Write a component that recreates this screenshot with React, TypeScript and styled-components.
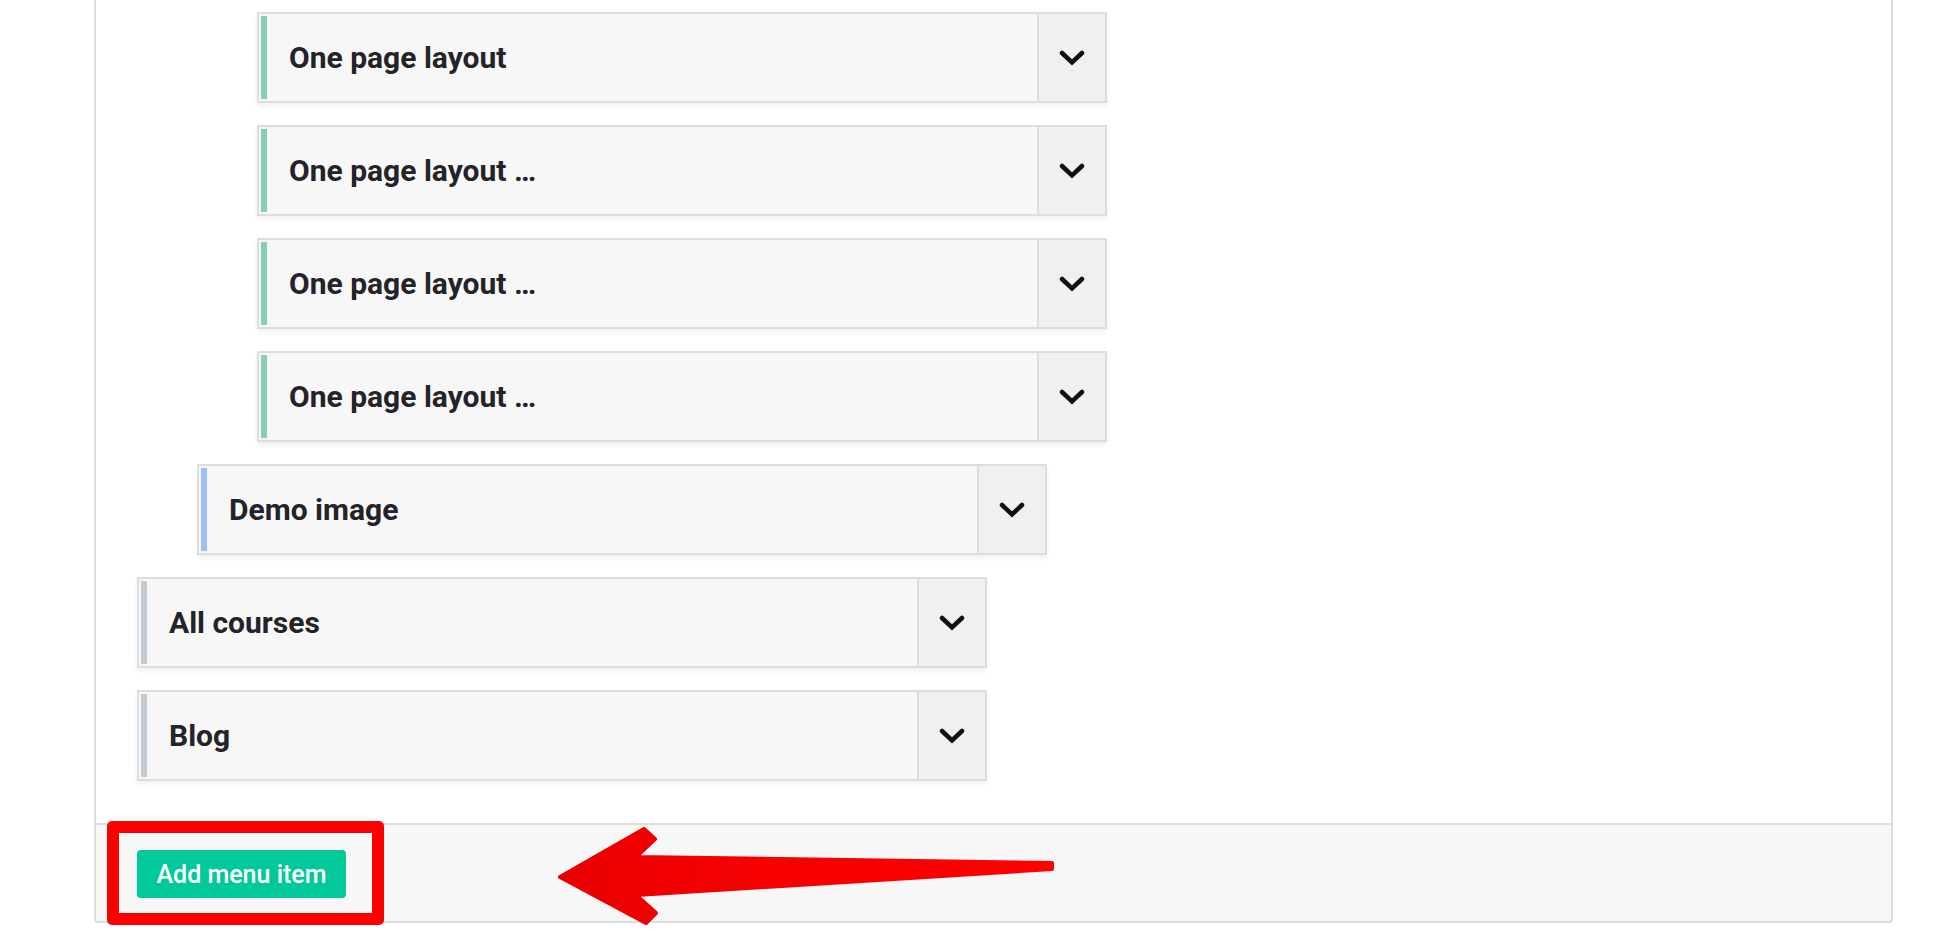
import React from "react";
import styled, { createGlobalStyle } from "styled-components";

const GlobalStyle = createGlobalStyle`
  body {
    margin: 0;
    background: #ffffff;
    font-family: Roboto, "Liberation Sans", Arial, sans-serif;
  }
`;

const Page = styled.div`
  position: relative;
  height: 944px;
  overflow: hidden;
  padding: 0 43px 0 94px;
`;

const Panel = styled.div`
  background: #ffffff;
  border: 2px solid #dddddd;
  border-top: none;
  border-radius: 0 0 4px 4px;
`;

const MenuList = styled.div`
  display: flex;
  flex-direction: column;
  gap: 22px;
  padding: 12px 0 42px 41px;
`;

const stripeColors = ["#c1cbd6", "#9cc0f6", "#86ceba"];

type LevelProps = { $level: number };

const MenuRow = styled.div<LevelProps>`
  display: flex;
  box-sizing: border-box;
  width: 850px;
  height: 91px;
  margin-left: ${({ $level }) => $level * 60}px;
  border: 2px solid #dddddd;
  background: #f7f7f7;
  box-shadow: 0 3px 5px rgba(0, 0, 0, 0.06);
`;

const Stripe = styled.div<LevelProps>`
  width: 6px;
  margin: 2px;
  background: ${({ $level }) => stripeColors[$level]};
`;

const Title = styled.div`
  flex: 1;
  display: flex;
  align-items: center;
  padding-left: 20px;
  font-size: 30px;
  font-weight: 700;
  color: #232329;
`;

const Toggle = styled.div`
  width: 66px;
  display: flex;
  align-items: center;
  justify-content: center;
  border-left: 2px solid #dddddd;
  background: #f0f0f0;
`;

const Footer = styled.div`
  border-top: 2px solid #dddddd;
  background: #f7f7f7;
  padding: 25px 41px 23px;
  border-radius: 0 0 4px 4px;
`;

const AddButton = styled.button`
  height: 48px;
  width: 209px;
  border: none;
  border-radius: 4px;
  background: #02c999;
  color: #ffffff;
  font-family: Roboto, "Liberation Sans", Arial, sans-serif;
  font-size: 25px;
  font-weight: 500;
  padding: 0;
`;

const RedFrame = styled.div`
  position: absolute;
  left: 107px;
  top: 821px;
  width: 277px;
  height: 104px;
  box-sizing: border-box;
  border: 12px solid #ff0000;
  border-radius: 5px;
`;

const ArrowMark = styled.svg`
  position: absolute;
  left: 550px;
  top: 820px;
`;

const Chevron = () => (
  <svg width="26" height="16" viewBox="0 0 26 16">
    <path
      d="M3 3 L13 12.5 L23 3"
      fill="none"
      stroke="#111111"
      strokeWidth="4.5"
      strokeLinecap="round"
      strokeLinejoin="miter"
    />
  </svg>
);

const items = [
  { title: "One page layout", level: 2 },
  { title: "One page layout …", level: 2 },
  { title: "One page layout …", level: 2 },
  { title: "One page layout …", level: 2 },
  { title: "Demo image", level: 1 },
  { title: "All courses", level: 0 },
  { title: "Blog", level: 0 },
];

export default function App() {
  return (
    <>
      <GlobalStyle />
      <Page>
        <Panel>
          <MenuList>
            {items.map((item, i) => (
              <MenuRow key={i} $level={item.level}>
                <Stripe $level={item.level} />
                <Title>{item.title}</Title>
                <Toggle>
                  <Chevron />
                </Toggle>
              </MenuRow>
            ))}
          </MenuList>
          <Footer>
            <AddButton>Add menu item</AddButton>
          </Footer>
        </Panel>
        <RedFrame />
        <ArrowMark width="510" height="112" viewBox="0 0 510 112">
          <defs>
            <linearGradient id="arrowFill" x1="0" y1="0" x2="1" y2="0">
              <stop offset="0" stopColor="#e80000" />
              <stop offset="0.3" stopColor="#f40000" />
              <stop offset="1" stopColor="#ff0000" />
            </linearGradient>
          </defs>
          <path
            d="M10 57 L94 9 L105 19 L86 37 L502 43 L502 49 L86 75 L106 93 L96 103 Z"
            fill="url(#arrowFill)"
            stroke="url(#arrowFill)"
            strokeWidth="4"
            strokeLinejoin="round"
          />
        </ArrowMark>
      </Page>
    </>
  );
}
